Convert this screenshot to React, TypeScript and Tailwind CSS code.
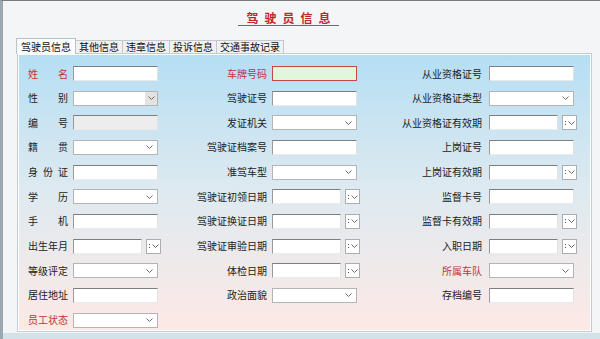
type Kind = 'text' | 'combo' | 'grayCombo' | 'disabled' | 'date' | 'plate';

interface Field {
  label: string;
  kind: Kind;
  red?: boolean;
}

const left: Field[] = [
  { label: '姓名', kind: 'text', red: true },
  { label: '性别', kind: 'grayCombo' },
  { label: '编号', kind: 'disabled' },
  { label: '籍贯', kind: 'combo' },
  { label: '身份证', kind: 'text' },
  { label: '学历', kind: 'combo' },
  { label: '手机', kind: 'text' },
  { label: '出生年月', kind: 'date' },
  { label: '等级评定', kind: 'combo' },
  { label: '居住地址', kind: 'text' },
  { label: '员工状态', kind: 'combo', red: true },
];

const middle: Field[] = [
  { label: '车牌号码', kind: 'plate', red: true },
  { label: '驾驶证号', kind: 'text' },
  { label: '发证机关', kind: 'combo' },
  { label: '驾驶证档案号', kind: 'text' },
  { label: '准驾车型', kind: 'combo' },
  { label: '驾驶证初领日期', kind: 'date' },
  { label: '驾驶证换证日期', kind: 'date' },
  { label: '驾驶证审验日期', kind: 'date' },
  { label: '体检日期', kind: 'date' },
  { label: '政治面貌', kind: 'combo' },
];

const right: Field[] = [
  { label: '从业资格证号', kind: 'text' },
  { label: '从业资格证类型', kind: 'combo' },
  { label: '从业资格证有效期', kind: 'date' },
  { label: '上岗证号', kind: 'text' },
  { label: '上岗证有效期', kind: 'date' },
  { label: '监督卡号', kind: 'text' },
  { label: '监督卡有效期', kind: 'date' },
  { label: '入职日期', kind: 'date' },
  { label: '所属车队', kind: 'combo', red: true },
  { label: '存档编号', kind: 'text' },
];

const tabs = ['驾驶员信息', '其他信息', '违章信息', '投诉信息', '交通事故记录'];

function Chevron() {
  return (
    <svg width="7" height="4" viewBox="0 0 7 4" className="shrink-0">
      <path d="M0.5 0.5 L3.5 3.5 L6.5 0.5" fill="none" stroke="#6b6b6b" strokeWidth="1" />
    </svg>
  );
}

function Input({ kind }: { kind: Kind }) {
  if (kind === 'combo' || kind === 'grayCombo') {
    return (
      <div className="w-[85px] h-[15px] flex items-center justify-end bg-white border border-[#b4b4b4]">
        {kind === 'grayCombo' ? (
          <div className="w-[12px] h-full flex items-center justify-center bg-[#e3e3e3]">
            <Chevron />
          </div>
        ) : (
          <div className="pr-[4px] flex items-center">
            <Chevron />
          </div>
        )}
      </div>
    );
  }
  if (kind === 'date') {
    return (
      <div className="flex items-center">
        <div className="w-[69px] h-[15px] bg-white border-t border-l border-t-[#7e7e7e] border-l-[#9a9a9a] border-r border-b border-r-[#e2e2e2] border-b-[#ebebeb]" />
        <div className="ml-[4px] w-[15px] h-[15px] flex items-center gap-[2px] pl-[2px] bg-white border border-[#adadad]">
          <div className="flex flex-col gap-[2px]">
            <div className="w-[1px] h-[1px] bg-[#555]" />
            <div className="w-[1px] h-[1px] bg-[#555]" />
          </div>
          <Chevron />
        </div>
      </div>
    );
  }
  if (kind === 'disabled') {
    return <div className="w-[85px] h-[15px] bg-[#ededed] border-t border-l border-t-[#7e7e7e] border-l-[#9a9a9a] border-r border-b border-r-[#e2e2e2] border-b-[#ebebeb]" />;
  }
  if (kind === 'plate') {
    return <div className="w-[85px] h-[15px] bg-[#e1f6dc] border border-[#c44a4a]" />;
  }
  return <div className="w-[85px] h-[15px] bg-white border-t border-l border-t-[#7e7e7e] border-l-[#9a9a9a] border-r border-b border-r-[#e2e2e2] border-b-[#ebebeb]" />;
}

function LeftLabel({ f }: { f: Field }) {
  return (
    <div className={`w-[40px] flex justify-between ${f.red ? 'text-[#c0353a]' : 'text-[#222]'}`}>
      {f.label.split('').map((c, i) => (
        <span key={i}>{c}</span>
      ))}
    </div>
  );
}

export default function App() {
  return (
    <div
      className="w-[600px] h-[339px] overflow-hidden flex flex-col bg-[#f3f5f7] border-t border-t-[#7a7a7a] border-l-[3px] border-l-[#9ba7b1]"
      style={{ fontFamily: '"Noto Sans CJK SC", "Noto Sans", sans-serif' }}
    >
      {/* title */}
      <div className="mt-[10px] ml-[235px] w-[101px] h-[15px] flex justify-center border-b-[1.5px] border-b-[#6a6a6a]">
        <span className="text-[12px] leading-[14px] font-bold text-[#c2262d] tracking-[6px] pl-[6px]">驾驶员信息</span>
      </div>

      {/* tabs */}
      <div className="mt-[12px] ml-[13px] h-[15px] flex items-end text-[10px] leading-[12px] text-[#111]">
        {tabs.map((t, i) =>
          i === 0 ? (
            <div key={t} className="h-[16px] px-[4px] flex items-center bg-[#fbfcfd] border border-b-0 border-[#b9c2c9] relative top-[1px] z-10">
              {t}
            </div>
          ) : (
            <div key={t} className="h-[13px] px-[3px] flex items-center bg-[#f0f1f2] border border-b-0 border-l-0 border-[#c3c8cc]">
              {t}
            </div>
          )
        )}
      </div>

      {/* panel */}
      <div className="ml-[14px] w-[575px] h-[279px] border border-[#c3ccd3] shadow-[inset_0_0_0_1px_#ffffff] bg-gradient-to-b from-[#b5def4] via-[#deeaf0] to-[#fde9e6] pt-[12px] pl-[10px] flex flex-col gap-[9.67px] text-[10px] leading-[12px] text-[#222]">
        {left.map((lf, i) => {
          const mf = middle[i];
          const rf = right[i];
          return (
            <div key={i} className="h-[15px] flex items-center">
              <div className="w-[162px] flex items-center">
                <LeftLabel f={lf} />
                <div className="ml-[5px]">
                  <Input kind={lf.kind} />
                </div>
              </div>
              {mf && (
                <>
                  <div className={`w-[77px] text-right whitespace-nowrap ${mf.red ? 'text-[#c0353a]' : ''}`}>{mf.label}</div>
                  <div className="ml-[5px] w-[89px]">
                    <Input kind={mf.kind} />
                  </div>
                </>
              )}
              {rf && (
                <>
                  <div className={`w-[121px] text-right whitespace-nowrap ${rf.red ? 'text-[#c0353a]' : ''}`}>{rf.label}</div>
                  <div className="ml-[7px]">
                    <Input kind={rf.kind} />
                  </div>
                </>
              )}
            </div>
          );
        })}
      </div>

      <div className="mt-[1px] h-[6px] bg-[#d3e1e9]" />
    </div>
  );
}
